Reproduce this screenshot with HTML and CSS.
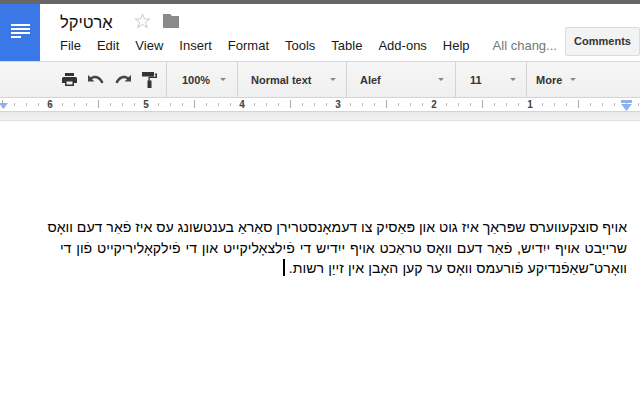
FILE: index.html
```html
<!DOCTYPE html>
<html lang="yi">
<head>
<meta charset="utf-8">
<title>אַרטיקל</title>
<link rel="stylesheet" href="styles.css">
</head>
<body>
<div class="topline"></div>
<header class="header">
  <div class="logo">
    <svg width="20" height="15" viewBox="0 0 20 15"><path fill="#fff" d="M0 0h19v2H0zM0 4h19v2H0zM0 8h19v2H0zM0 12h10v2H0z"/></svg>
  </div>
  <div class="titlecol">
    <div class="titlerow">
      <span class="doctitle" dir="rtl">אַרטיקל</span>
      <svg class="star" width="17" height="16" viewBox="0 0 17 16"><path fill="#fff" stroke="#c9c9c9" d="M8.5 1l2 5h5.300l-4.300 3.300 1.700 5.400-4.700-3.300-4.700 3.300 1.700-5.400-4.300-3.300h5.300z"/></svg>
      <svg class="folder" width="16" height="14" viewBox="0 0 16 14"><path fill="#8a8a8a" d="M0 0h7l2 2h7v12H0z"/></svg>
    </div>
    <nav class="menu">
      <span>File</span><span>Edit</span><span>View</span><span>Insert</span><span>Format</span><span>Tools</span><span>Table</span><span>Add-ons</span><span>Help</span><span class="saved">All chang...</span>
    </nav>
  </div>
  <button class="comments">Comments</button>
</header>
<div class="toolbar">
  <div class="tools">
    <svg width="15" height="14" viewBox="0 0 15 14"><path fill="#333" d="M3 0h9v3H3zM1.500 4h12q1.500 0 1.500 1.500V10h-3v3H3v-3H0V5.500Q0 4 1.500 4zM4.500 8.500v3h6v-3z"/></svg>
    <svg width="16" height="9" viewBox="0 0 16 9"><path fill="#444" d="M0 0v6.500h6.500L4 4.300C6 2.700 10.500 2.500 13.500 8.500L15.500 7.500C12.500 0 6 -.5 2.500 2.300z"/></svg>
    <svg width="16" height="9" viewBox="0 0 16 9"><path fill="#444" d="M16 0v6.500H9.500L12 4.300C10 2.700 5.500 2.500 2.500 8.500L.5 7.500C3.500 0 10 -.5 13.500 2.300z"/></svg>
    <svg width="15" height="16" viewBox="0 0 15 16"><path fill="#333" d="M0 0h12v4.500H0zM12.800 1.500H15v4.500H7.800v2.500H9.500V16H5.500V8.500H6.500V4.800h7V2.800h-.7z"/></svg>
  </div>
  <div class="dd dd-zoom"><span>100%</span><i></i></div>
  <div class="dd dd-style"><span>Normal text</span><i></i></div>
  <div class="dd dd-font"><span>Alef</span><i></i></div>
  <div class="dd dd-size"><span>11</span><i></i></div>
  <div class="dd dd-more"><span>More</span><i></i></div>
</div>
<div class="ruler">
  <svg class="marker marker-l" width="9" height="6" viewBox="0 0 9 6"><path fill="#8eb0ec" d="M0 0h9L4.500 6z"/></svg>
  <span class="inch">6</span><span class="inch">5</span><span class="inch">4</span><span class="inch">3</span><span class="inch">2</span><span class="inch">1</span>
  <svg class="marker marker-r" width="12" height="11" viewBox="0 0 12 11"><path fill="#8eb0ec" d="M0 0h11v3H0zM0 4h11L5.500 11z"/></svg>
</div>
<div class="shade"></div>
<main class="page" dir="rtl" lang="yi">
  <p class="doc"><span class="line">אויף סוצקעווערס שפּראַך איז גוט און פּאַסיק צו דעמאָנסטרירן סאַראַ בענטשונג עס איז פֿאַר דעם וואָס</span><span class="line line-second">שרייַבט אויף ייִדיש, פֿאַר דעם וואָס טראַכט אויף ייִדיש די פֿילצאָליקייט און די פֿילקאָליריקייט פֿון די</span><span class="line line-third">וואָרט־שאַפֿנדיקע פֿורעמס וואָס ער קען האָבן אין זייַן רשות.<b class="caret"></b></span></p>
</main>
</body>
</html>
```
FILE: styles.css
```css
* { box-sizing: border-box; }
html, body { margin: 0; padding: 0; }
body {
  width: 640px;
  height: 400px;
  overflow: hidden;
  background: #fff;
  font-family: "Liberation Sans", Arial, sans-serif;
  color: #111;
}
.topline { height: 4px; background: #666; }
.header {
  height: 58px;
  display: flex;
  border-bottom: 1px solid #d9d9d9;
  position: relative;
}
.logo {
  width: 40px;
  height: 57px;
  background: #3b78e7;
  display: flex;
  align-items: center;
  justify-content: center;
  padding-left: 1px;
  padding-bottom: 2px;
}
.titlecol { padding-left: 20px; flex: 1; }
.titlerow {
  height: 30px;
  display: flex;
  align-items: center;
  padding-top: 7px;
}
.doctitle {
  font-size: 16.500px;
  width: 53px;
  text-align: left;
  color: #111;
}
.star { margin-left: 21px; margin-top: -3px; }
.folder { margin-left: 12px; margin-top: -3px; }
.menu {
  display: flex;
  font-size: 13px;
  line-height: 15px;
  margin-top: 4px;
  color: #1a1a1a;
}
.menu span { margin-right: 16px; }
.saved { color: #777; margin-left: 7px; }
.comments {
  position: absolute;
  top: 23px;
  left: 565px;
  width: 75px;
  height: 29px;
  border: 1px solid #dcdcdc;
  border-radius: 2px;
  background: #f3f3f3;
  font: bold 11px "Liberation Sans", Arial, sans-serif;
  color: #333;
  padding: 0 0 2px;
  margin: 0;
}
.toolbar {
  height: 36px;
  display: flex;
  background: linear-gradient(#f6f6f6, #efefef);
  border-bottom: 1px solid #d4d4d4;
}
.tools {
  width: 167px;
  display: flex;
  align-items: center;
  padding-left: 62px;
  gap: 11px;
  border-right: 1px solid #d4d4d4;
}
.dd {
  display: flex;
  align-items: center;
  justify-content: space-between;
  font-size: 11px;
  font-weight: bold;
  color: #333;
  border-right: 1px solid #d4d4d4;
}
.dd i {
  width: 0;
  height: 0;
  border-left: 3px solid transparent;
  border-right: 3px solid transparent;
  border-top: 3px solid #888;
}
.dd-zoom { width: 71px; padding: 0 11px 0 15px; }
.dd-style { width: 109px; padding: 0 10px 0 13px; }
.dd-font { width: 109px; padding: 0 11px 0 13px; }
.dd-size { width: 71px; padding: 0 10px 0 14px; }
.dd-more {
  border-right: 0;
  padding-left: 9px;
  gap: 8px;
}
.ruler {
  height: 14px;
  display: flex;
  position: relative;
  padding-left: 2px;
  background-color: #fff;
  background-image:
    repeating-linear-gradient(90deg, #aaa 0 1px, transparent 1px 96px),
    repeating-linear-gradient(90deg, #bbb 0 1px, transparent 1px 12px);
  background-size: 100% 8px, 100% 3px;
  background-position: 2px 2px, 2px 5px;
  background-repeat: no-repeat;
  border-bottom: 1px solid #d4d4d4;
}
.inch {
  width: 96px;
  font-size: 10px;
  font-weight: bold;
  line-height: 14px;
  text-align: center;
  color: #444;
}
.marker { position: absolute; }
.marker-l { left: -1px; top: 5px; }
.marker-r { left: 621px; top: 2px; }
.shade {
  height: 9px;
  background: linear-gradient(#e9e9e9, #f1f1f1);
  border-bottom: 1px solid #e0e0e0;
}
.page { height: 279px; padding: 96px 13px 0 0; }
.doc {
  margin: 0;
  font-size: 14.100px;
  line-height: 20.500px;
  color: #000;
}
.line { display: block; white-space: nowrap; }
.line-second { word-spacing: 0.950px; }
.line-third { word-spacing: 0.300px; }
.caret {
  display: inline-block;
  width: 2px;
  height: 17px;
  background: #000;
  margin-right: 4px;
  vertical-align: -3px;
}
```
